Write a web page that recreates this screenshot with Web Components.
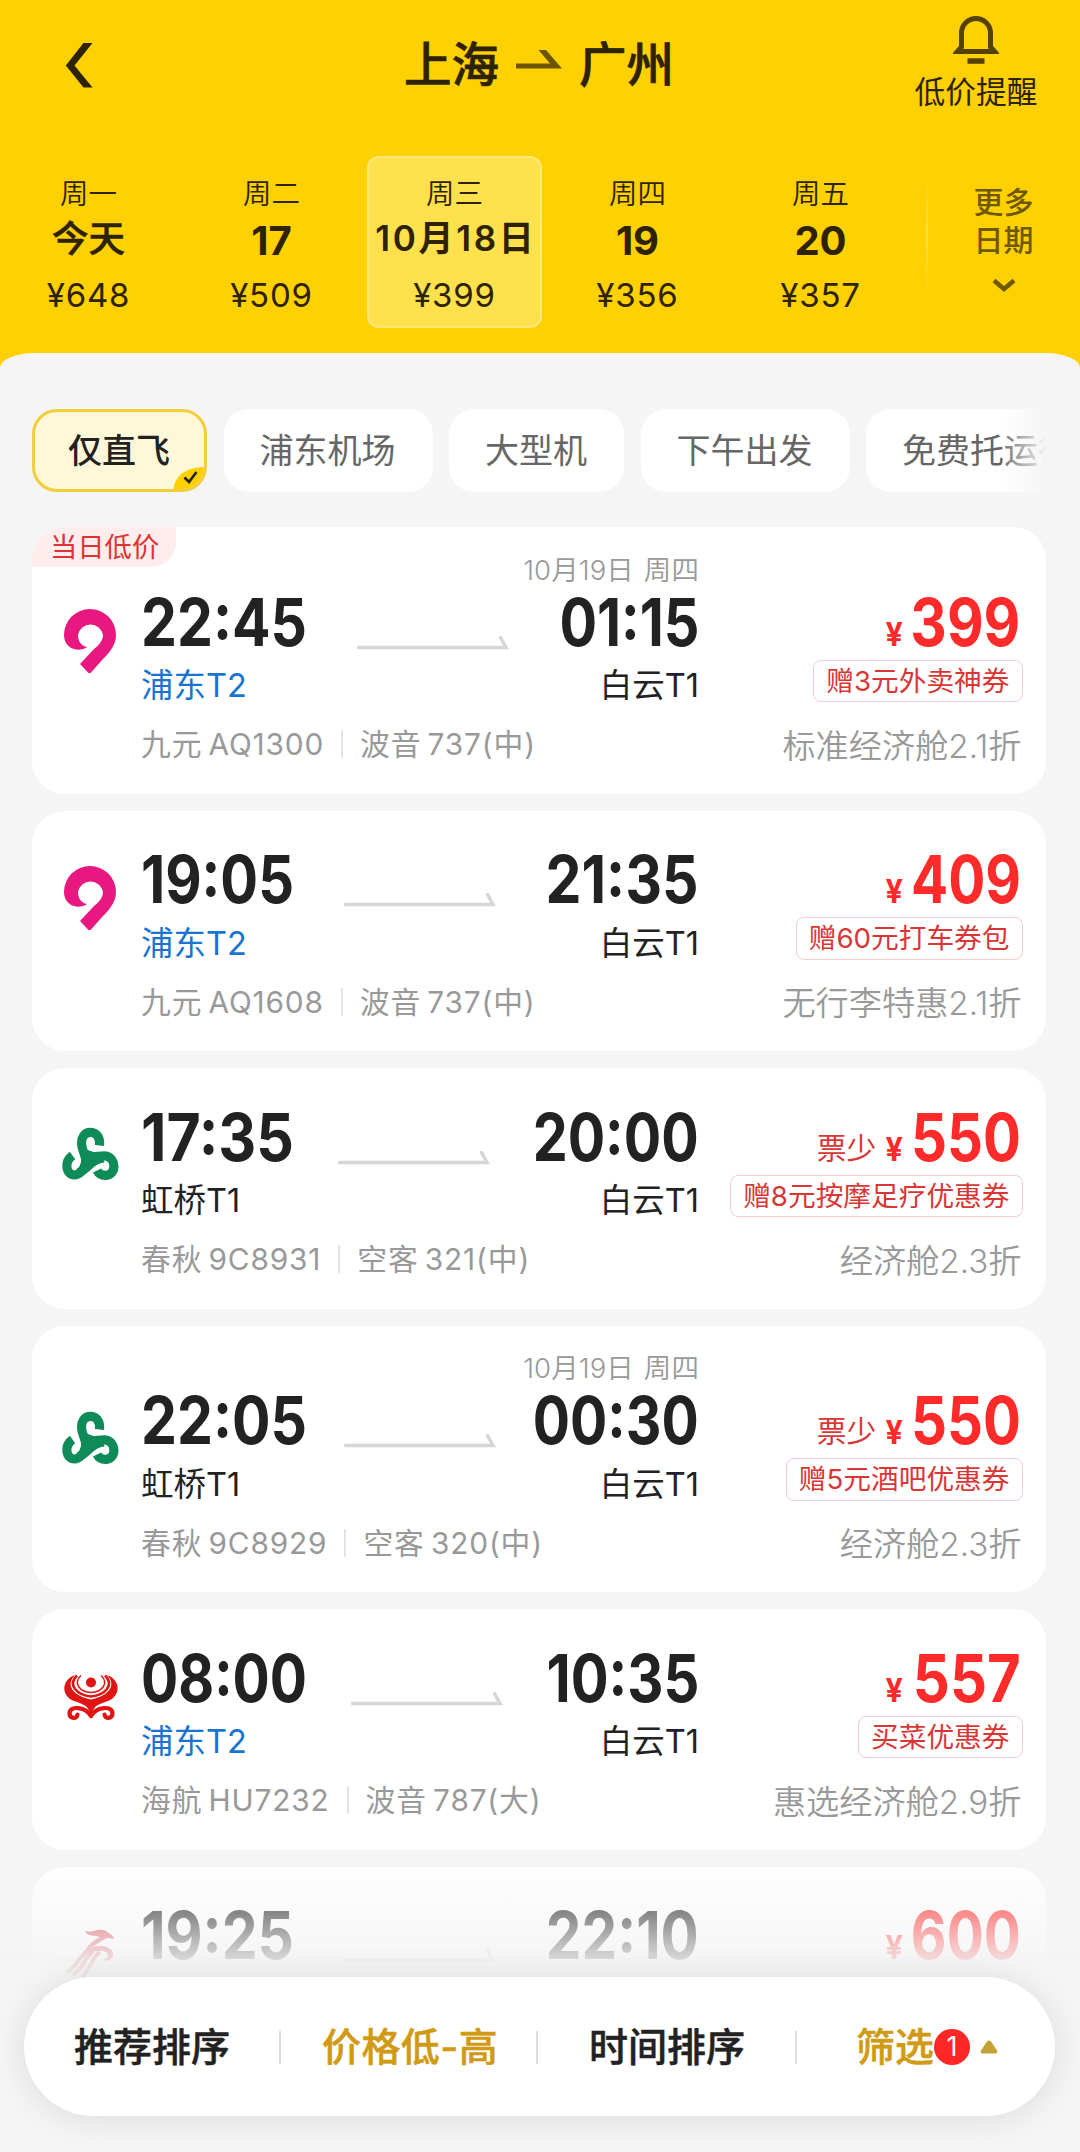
<!DOCTYPE html>
<html lang="zh-CN">
<head>
<meta charset="utf-8">
<title>上海 - 广州</title>
<style>
  html, body { margin: 0; padding: 0; }
  body {
    width: 1080px; height: 2152px; overflow: hidden; background: #f5f5f5;
    font-family: Inter, "Noto Sans CJK SC", sans-serif; color: #222;
  }
</style>
</head>
<body>
<flight-app></flight-app>

<script>
const define = (name, html, setup) => {
  const tpl = document.createElement('template');
  tpl.innerHTML = html;
  customElements.define(name, class extends HTMLElement {
    connectedCallback() {
      if (this.shadowRoot) return;
      const root = this.attachShadow({ mode: 'open' });
      root.append(tpl.content.cloneNode(true));
      if (setup) setup(this, root);
    }
  });
};

/* ---------- airline logos ---------- */
const LOGOS = {
  jiuyuan: `<svg viewBox="0 0 80 90" width="80" height="90" style="margin-top:-17px"><path fill="#e91880" d="M37 52C29 58 14 54 14 40A26 26 0 0 1 66 40C66 50 59 58 53 64L41 77.500Q39.500 79 38 77.500L30 69L44 54C50 49 53 45 53 40A12.700 12.700 0 0 0 28 40C28 46 31 51 37 52Z"/></svg>`,
  spring: `<svg viewBox="0 0 80 80" width="80" height="80" style="margin-top:-11.500px"><g fill="none" stroke="#0e8b58" stroke-width="9.200"><path d="M49.500 30.500C50.500 21 45 17.300 40.500 17.300C34 17.300 31.500 23 31.500 28C31.500 37 37 40 35.500 48C34 55 29 60 24.500 60C16 60 13.500 47 22.500 40.500"/><path d="M34 38C42 45 48 40 56 41C66 43 67 59.500 56 60.300C51 60.500 48.500 58.500 47 55.500"/><path d="M28 58C38 55 40 44 54 43"/></g><path fill="#0e8b58" d="M32 33L58 42L48 47L33 60Z"/></svg>`,
  hainan: `<svg viewBox="0 0 80 70" width="80" height="70" style="margin-top:-7px"><path fill="#e01414" d="M25 14C11 19 11 35 24 40C33 43 38 45 41 51C44 45 49 43 58 40C71 35 71 19 57 14C67 24 59 35 41 38.500C23 35 15 24 25 14Z"/><g fill="none" stroke="#e01414"><path stroke-width="2.600" d="M27 14.500C17 24 27 34 41 35.500C55 34 65 24 55 14.500"/><path stroke-width="1.500" d="M31 14.500C22 23 31 31 41 31.500C51 31 60 23 51 14.500"/><path stroke-width="4.200" stroke-linecap="round" d="M41 55C36 46 20 44 19.500 52C19.500 58 27 58.500 27.500 53.500"/><path stroke-width="4.200" stroke-linecap="round" d="M41 55C46 46 62 44 62.500 52C62.500 58 55 58.500 54.500 53.500"/></g><path fill="#e01414" d="M33 39L41 53L49 39Z"/><circle cx="41" cy="21.500" r="5" fill="#e01414"/></svg>`,
  shenzhen: `<svg viewBox="0 0 90 70" width="90" height="70" style="margin-top:-15px"><g fill="#d83a48"><path d="M35 21C42 24 48 17 56 21L63 26L64 29L57 28C50 32 43 36 33 44C38 34 44 30 50 27C44 25 38 27 35 21Z"/><path d="M33 42C44 34 60 34 63 43C65 50 56 53 52 49C60 50 59 41 52 41C44 40 38 44 32 45Z"/></g><g fill="none" stroke="#d83a48" stroke-width="4"><path d="M36 43C28 48 26 57 17 62"/><path d="M43 42C33 49 33 59 23 65"/><path d="M50 42C42 47 40 60 32 67"/></g></svg>`
};
define('airline-logo', `<style>
  :host { display: flex; justify-content: flex-start; width: 110px; flex: none; box-sizing: border-box; padding-left: 18px; padding-top: 13px; }
  svg { display: block; flex: none; overflow: visible; }
</style>`, (el, root) => root.append(document.createRange().createContextualFragment(LOGOS[el.getAttribute('name')])));

/* ---------- header ---------- */
define('route-header', `<style>
  :host { display: flex; justify-content: space-between; height: 130px; color: #2e2300; }
  .back { width: 200px; padding: 43px 0 0 65px; box-sizing: border-box; }
  svg { display: block; }
  .route { display: flex; align-items: center; height: 130px; gap: 17px; font-size: 47.500px; font-weight: 500; line-height: 48px; margin: 0 2px 0 0; -webkit-text-stroke: .7px #2e2300; }
  .route svg { flex: none; }
  .alert { width: 200px; display: flex; flex-direction: column; align-items: center; padding: 16px 8px 0 0; box-sizing: border-box; font-size: 30.700px; line-height: 40px; }
  .alert span { margin-top: 6px; white-space: nowrap; }
</style>
<div class="back"><svg width="28" height="45" viewBox="0 0 28 45"><path fill="#2e2300" d="M18.500 0H27.500L9.500 22.500L27.500 44.500H18.500L.800 22.500Z"/></svg></div>
<div class="route"><slot name="from"></slot>
  <svg width="46" height="28" viewBox="0 0 46 28" style="margin-top:-12px"><path fill="#6b5500" d="M0 18.500H34L22.500 5H30L46 23.500H0Z"/></svg>
  <slot name="to"></slot></div>
<div class="alert"><svg width="46" height="50" viewBox="0 0 46 50"><path fill="none" stroke="#544200" stroke-width="5" d="M8.500 31V17A14.500 14.500 0 0 1 37.500 17V31L41.500 35.500H4.500Z"/><path stroke="#544200" stroke-width="5.500" d="M14.500 45H31.500"/></svg><span><slot></slot></span></div>`);

define('date-tab', `<style>
  :host { display: flex; flex-direction: column; align-items: center; width: 175px; height: 172px; box-sizing: border-box; border: 2px solid transparent; border-radius: 12px; color: #2e2300; white-space: nowrap; }
  :host([selected]) { background: #ffe04d; border-color: #ffe878; }
  .w { font-size: 28.500px; line-height: 32px; margin-top: 20px; font-weight: 350; }
  .d { font-size: 40px; line-height: 40px; margin-top: 11px; font-weight: 700; }
  .d.cjk { font-size: 36.500px; font-weight: 500; margin-top: 9px; margin-bottom: 2px; -webkit-text-stroke: .6px #2e2300; }
  .d.mix { font-size: 35px; font-weight: 600; letter-spacing: 2.700px; margin: 8px -2.700px 3px 0; }
  .p { font-size: 33px; line-height: 40px; margin-top: 14px; letter-spacing: .8px; font-weight: 370; }
</style><div class="w"></div><div class="d"></div><div class="p"></div>`, (el, root) => {
  const d = el.getAttribute('day'), node = root.querySelector('.d');
  root.querySelector('.w').textContent = el.getAttribute('week');
  node.textContent = d;
  if (/^\D+$/.test(d)) node.classList.add('cjk'); else if (/\D/.test(d)) node.classList.add('mix');
  root.querySelector('.p').textContent = el.getAttribute('price');
});

define('date-strip', `<style>
  :host { display: flex; gap: 8px; padding: 26px 0 0 1px; height: 197px; box-sizing: border-box; }
  .more { display: flex; flex-direction: column; align-items: center; width: 60px; margin-left: 37.500px; padding-top: 28px; font-size: 30px; font-weight: 500; line-height: 37.500px; color: #6f5900; flex: none; white-space: nowrap; }
  .line { width: 2px; height: 120px; margin: 19px 0 0 10px; background: linear-gradient(#ffd31a00, #ffdf4a, #ffd31a00); flex: none; }
  svg { margin-top: 19px; display: block; }
</style><slot></slot><div class="line"></div>
<div class="more"><div>更多</div><div>日期</div><svg width="24" height="15" viewBox="0 0 24 15"><path d="M2 2.500L12 11L22 2.500" fill="none" stroke="#6f5900" stroke-width="4.500"/></svg></div>`);

/* ---------- filter chips ---------- */
define('filter-chip', `<style>
  :host { display: flex; align-items: center; justify-content: center; position: relative; overflow: hidden; flex: none; height: 83px; box-sizing: border-box; padding: 2px 37px 0 36px; border-radius: 25px; background: #fff; font-size: 34px; color: #666; line-height: 40px; white-space: nowrap; }
  :host([active]) { background: #fff8d8; border: 3px solid #f2cf3a; padding: 2px 34px 0 33px; font-weight: 500; color: #222; }
  svg { display: none; position: absolute; right: -3px; bottom: -3px; }
  :host([active]) svg { display: block; }
</style><slot></slot><svg width="34" height="26" viewBox="0 0 34 26"><path fill="#ffd000" d="M0 26C1 9 13 1 34 1V26Z"/><path fill="none" stroke="#222" stroke-width="2.600" d="M11.500 11.500L16 16L23.500 6"/></svg>`);
define('chip-row', `<style>
  :host { display: block; position: relative; width: 1014px; margin: 0 0 0 32px; overflow: hidden; height: 83px; }
  .row { display: flex; gap: 16.500px; }
  .fade { position: absolute; right: 0; top: 0; width: 40px; height: 83px; background: linear-gradient(90deg, rgba(245,245,245,.15), #f5f5f5); }
</style><div class="row"><slot></slot></div><div class="fade"></div>`);

/* ---------- flight card ---------- */
define('flight-card', `<style>
  :host { display: flex; position: relative; overflow: hidden; box-sizing: border-box; width: 1014px; height: 240.500px; padding-top: 45.500px; border-radius: 33px; background: #fff; white-space: nowrap; flex: none; }
  :host([note]) { height: 266.500px; padding-top: 71.500px; }
  .tag { position: absolute; left: 0; top: 0; height: 40px; padding: 0 17px 0 18px; border-radius: 0 0 25px 0; background: #ffecec; color: #dc3434; font-size: 27.300px; line-height: 42px; }
  .tag:empty, .note:empty, .few:empty { display: none; }
  .main { width: 558px; flex: none; margin: 0 2px 0 -1px; }
  .note { margin-top: -42px; margin-bottom: 16px; font-size: 27.500px; line-height: 26px; text-align: right; color: #999; font-weight: 350; letter-spacing: .1px; word-spacing: 2px; }
  .times { display: flex; justify-content: space-between; height: 48px; line-height: 48px; font-size: 65.500px; font-weight: 700; color: #222; }
  .dep, .arr, .num span { display: block; }
  .dep { transform-origin: 0 50%; }
  .arr { transform-origin: 100% 50%; }
  .arrow { flex: none; margin-top: 37px; }
  .ports { display: flex; justify-content: space-between; margin-top: 19.500px; font-size: 32.500px; line-height: 40px; }
  .from.hot { color: #1a74cf; }
  .info { display: flex; align-items: center; margin-top: 18px; font-size: 29.800px; line-height: 40px; color: #999; letter-spacing: .85px; word-spacing: -3px; font-weight: 370; }
  .bar { width: 2px; height: 28px; margin: 0 17px 0 17px; background: #e4e4e4; }
  .side { display: flex; flex-direction: column; align-items: flex-end; flex: 1; margin-right: 23.500px; }
  .price { display: flex; align-items: baseline; height: 48px; line-height: 48px; color: #ff2a2a; font-weight: 700; }
  .few { font-size: 29.800px; font-weight: 400; color: #d93636; margin-right: 9px; transform: translateY(-2px); }
  .yen { font-size: 32px; display: block; transform: scaleX(.95); }
  .num { width: 107px; margin-left: 10px; margin-right: 2px; font-size: 65.500px; display: flex; justify-content: flex-end; }
  .num span { transform-origin: 100% 50%; }
  .coupon { margin-top: 13px; height: 42.500px; box-sizing: border-box; padding: 0 12px; border: 1.500px solid #f3cccc; border-radius: 8px; font-size: 27.700px; line-height: 40px; color: #d93636; }
  .coupon:empty { display: none; }
  .cabin { margin: 23.500px 1px 0 0; font-size: 33.200px; line-height: 40px; color: #999; font-weight: 350; }
</style>
<div class="tag"></div>
<slot name="logo"></slot>
<div class="main">
  <div class="note"></div>
  <div class="times"><span class="dep"></span><svg class="arrow" width="152" height="14" viewBox="0 0 152 14"><path d="M1.500 11.500H149L143.500 1.500" fill="none" stroke="#d6d6d6" stroke-width="3.500" stroke-linecap="round"/></svg><span class="arr"></span></div>
  <div class="ports"><span class="from"></span><span class="to"></span></div>
  <div class="info"><span class="no"></span><span class="bar"></span><span class="plane"></span></div>
</div>
<div class="side">
  <div class="price"><span class="few"></span><span class="yen">¥</span><span class="num"><span class="amt"></span></span></div>
  <div class="coupon"></div>
  <div class="cabin"></div>
</div>`, (el, root) => {
  const q = (s) => root.querySelector(s);
  for (const k of ['tag', 'note', 'dep', 'arr', 'from', 'to', 'no', 'plane', 'few', 'amt', 'coupon', 'cabin'])
    q('.' + k).textContent = el.getAttribute(k) || '';
  if ((el.getAttribute('from') || '').startsWith('浦东')) q('.from').classList.add('hot');
  /* condense the numerals: every digit takes the same width, "1" a narrower one */
  const condense = (node, width) => {
    const natural = node.getBoundingClientRect().width;
    if (natural) node.style.transform = `scaleX(${(width / natural).toFixed(4)})`;
    return width - natural;
  };
  for (const [k, side] of [['dep', 'marginRight'], ['arr', 'marginLeft']]) {
    const n = q('.' + k), ones = n.textContent.split('1').length - 1;
    n.style[side] = condense(n, 166 - 13 * ones) + 'px';
  }
  condense(q('.amt'), 110 - 2 * (el.getAttribute('amt').split('7').length - 1));
});

/* ---------- bottom sort bar ---------- */
define('sort-bar', `<style>
  :host { display: flex; align-items: center; box-sizing: border-box; width: 1031px; height: 138.500px; padding: 2px 0 0 50px; border-radius: 69.500px; background: #fff; box-shadow: 0 2px 34px rgba(0,0,0,.11); font-size: 39px; font-weight: 500; line-height: 46px; color: #222; white-space: nowrap; -webkit-text-stroke: .5px currentColor; }
  .g { color: #d19a14; }
  .b { letter-spacing: .4px; }
  i { width: 2px; height: 33px; background: #dcdcdc; flex: none; }
  .a { width: 156px; margin-right: 49px; }
  .b { width: 174px; margin: 0 40px 0 41px; }
  .c { width: 156px; margin: 0 50px 0 51px; }
  .f { display: flex; align-items: center; margin-left: 59px; }
  .badge { width: 36px; height: 36px; border-radius: 50%; background: #ff2626; color: #fff; font-size: 27px; font-weight: 400; line-height: 36px; text-align: center; margin: 0 10px 0 0; -webkit-text-stroke: 0; }
  svg { display: block; }
</style>
<span class="a">推荐排序</span><i></i><span class="b g">价格低-高</span><i></i><span class="c">时间排序</span><i></i>
<span class="f g">筛选<span class="badge">1</span><svg width="18" height="14" viewBox="0 0 18 14"><path fill="#c4a135" d="M7 1.500Q9 -.500 11 1.500L17 10.500Q18 13.500 15.500 13.500H2.500Q0 13.500 1 10.500Z"/></svg></span>`);

/* ---------- page ---------- */
define('flight-app', `<style>
  :host { display: block; position: relative; width: 1080px; height: 2152px; overflow: hidden; background: #f5f5f5; }
  .top { background: #ffd002; height: 380px; }
  .sheet { margin-top: -27px; padding-top: 55.500px; background: #f5f5f5; border-radius: 34px 34px 0 0 / 15px 15px 0 0; }
  .list { display: flex; flex-direction: column; gap: 17px; margin: 35.500px 0 0 32px; }
  .veil { position: absolute; left: 0; right: 0; top: 1850px; height: 302px; background: linear-gradient(rgba(245,245,245,0), rgba(245,245,245,.48) 63px, rgba(244,244,244,.88) 110px, #f5f5f5 145px); }
  sort-bar { position: absolute; left: 24px; top: 1977px; }
</style>
<div class="top">
  <route-header><span slot="from">上海</span><span slot="to">广州</span>低价提醒</route-header>
  <date-strip>
    <date-tab week="周一" day="今天" price="¥648"></date-tab>
    <date-tab week="周二" day="17" price="¥509"></date-tab>
    <date-tab week="周三" day="10月18日" price="¥399" selected></date-tab>
    <date-tab week="周四" day="19" price="¥356"></date-tab>
    <date-tab week="周五" day="20" price="¥357"></date-tab>
  </date-strip>
</div>
<div class="sheet">
  <chip-row>
    <filter-chip active>仅直飞</filter-chip>
    <filter-chip>浦东机场</filter-chip>
    <filter-chip>大型机</filter-chip>
    <filter-chip>下午出发</filter-chip>
    <filter-chip>免费托运行李</filter-chip>
  </chip-row>
  <div class="list">
    <flight-card tag="当日低价" note="10月19日 周四" dep="22:45" arr="01:15" from="浦东T2" to="白云T1" no="九元 AQ1300" plane="波音 737(中)" amt="399" coupon="赠3元外卖神券" cabin="标准经济舱2.1折"><airline-logo slot="logo" name="jiuyuan"></airline-logo></flight-card>
    <flight-card dep="19:05" arr="21:35" from="浦东T2" to="白云T1" no="九元 AQ1608" plane="波音 737(中)" amt="409" coupon="赠60元打车券包" cabin="无行李特惠2.1折"><airline-logo slot="logo" name="jiuyuan"></airline-logo></flight-card>
    <flight-card dep="17:35" arr="20:00" from="虹桥T1" to="白云T1" no="春秋 9C8931" plane="空客 321(中)" few="票少" amt="550" coupon="赠8元按摩足疗优惠券" cabin="经济舱2.3折"><airline-logo slot="logo" name="spring"></airline-logo></flight-card>
    <flight-card note="10月19日 周四" dep="22:05" arr="00:30" from="虹桥T1" to="白云T1" no="春秋 9C8929" plane="空客 320(中)" few="票少" amt="550" coupon="赠5元酒吧优惠券" cabin="经济舱2.3折"><airline-logo slot="logo" name="spring"></airline-logo></flight-card>
    <flight-card dep="08:00" arr="10:35" from="浦东T2" to="白云T1" no="海航 HU7232" plane="波音 787(大)" amt="557" coupon="买菜优惠券" cabin="惠选经济舱2.9折"><airline-logo slot="logo" name="hainan"></airline-logo></flight-card>
    <flight-card dep="19:25" arr="22:10" amt="600"><airline-logo slot="logo" name="shenzhen"></airline-logo></flight-card>
  </div>
</div>
<div class="veil"></div>
<sort-bar></sort-bar>`);
</script>
</body>
</html>
